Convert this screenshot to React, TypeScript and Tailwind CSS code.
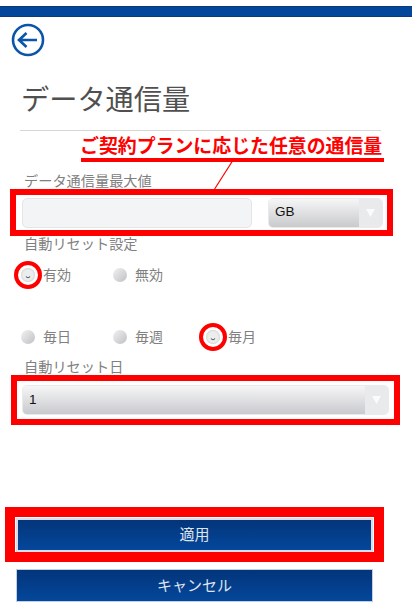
const jp = "font-['Noto_Sans_CJK_JP',sans-serif]";

function Radio({ checked }: { checked?: boolean }) {
  return (
    <span
      className={`flex h-[14px] w-[14px] shrink-0 items-end justify-center rounded-full ${
        checked
          ? "bg-[#eceded] shadow-[inset_0_0_2px_#b5b6b8]"
          : "bg-gradient-to-br from-[#f2f2f3] to-[#bfc0c3]"
      }`}
    >
      {checked && (
        <svg viewBox="0 0 6 3" className="mb-[3px] h-[3px] w-[6px]" aria-hidden>
          <path d="M1 0.5 Q3 3 5 0.5" fill="none" stroke="#555" strokeWidth="1.1" />
        </svg>
      )}
    </span>
  );
}

function RadioOption({ label, checked, ring, width }: { label: string; checked?: boolean; ring?: boolean; width: string }) {
  return (
    <div className={`flex items-center gap-[8px] ${width}`}>
      <span className="relative flex">
        <Radio checked={checked} />
        {ring && (
          <span className="absolute left-[-7px] top-[-7px] h-[28px] w-[28px] rounded-full border-[4px] border-[#ff0000]" />
        )}
      </span>
      <span className="pb-[2px] text-[14px] leading-[20px] text-[#808080]">{label}</span>
    </div>
  );
}

function Select({ value, width }: { value: string; width: string }) {
  return (
    <div className={`flex h-[30px] overflow-hidden rounded-[5px] border border-[#e9eaeb] ${width}`}>
      <div className="flex flex-1 items-center bg-gradient-to-b from-[#f6f6f7] to-[#c9cacd] pl-[6px] font-['Liberation_Sans',sans-serif] text-[13.5px] text-[#111]">
        {value}
      </div>
      <div className="flex w-[23px] items-center justify-center bg-[#e9eaeb]">
        <svg viewBox="0 0 10 9" className="h-[8px] w-[9px]" aria-hidden>
          <path d="M0 0H10L5 9Z" fill="#fbfbfb" />
        </svg>
      </div>
    </div>
  );
}

export default function App() {
  return (
    <div className={`relative h-[612px] w-[412px] overflow-hidden bg-white ${jp}`}>
      <div className="mt-[6px] h-[11px] border-y border-y-[#0a3a7c] bg-[#03479b]" />

      <div className="ml-[11px] mt-[6px] h-[34px] w-[34px]">
        <svg viewBox="0 0 34 34" className="h-[34px] w-[34px]" aria-hidden>
          <circle cx="17" cy="17" r="15" fill="none" stroke="#0b55a8" strokeWidth="2.6" />
          <path d="M26 17H8M15.5 10L8 17L15.5 24" fill="none" stroke="#0b55a8" strokeWidth="2.6" />
        </svg>
      </div>

      <h1 className="ml-[21px] mt-[9px] h-[64px] text-[28.2px] font-normal leading-[64px] text-[#505050]">データ通信量</h1>
      <div className="ml-[20px] h-px w-[361px] bg-[#d6d6d6]" />

      <div className="ml-[80px] h-[27px] w-[304px] whitespace-nowrap text-[18.9px] font-bold leading-[27px] text-[#ff0000]">
        ご契約プランに応じた任意の通信量
      </div>
      <div className="ml-[81px] h-[4px] w-[303px] bg-[#ff0000]" />
      <svg viewBox="0 0 20 30" className="absolute left-[213px] top-[161px] h-[30px] w-[20px]" aria-hidden>
        <path d="M19.5 0L1 29" stroke="#ff0000" strokeWidth="1.2" fill="none" />
      </svg>

      <div className="ml-[24px] h-[27px] pt-[8px] text-[14.2px] leading-[20px] text-[#808080]">データ通信量最大値</div>

      <div className="ml-[10px] flex h-[47px] w-[383px] items-center gap-[16px] border-[6px] border-[#ff0000] pl-[6px]">
        <div className="h-[30px] w-[230px] rounded-[5px] border border-[#e4e5e7] bg-[#f3f4f6]" />
        <Select value="GB" width="w-[115px]" />
      </div>

      <div className="ml-[24px] h-[16px] text-[14.2px] leading-[14px] text-[#808080]">自動リセット設定</div>

      <div className="ml-[21px] mt-[9px] flex h-[28px] items-center">
        <RadioOption label="有効" checked ring width="w-[92px]" />
        <RadioOption label="無効" width="w-[92px]" />
      </div>

      <div className="ml-[21px] mt-[34px] flex h-[28px] items-center">
        <RadioOption label="毎日" width="w-[92px]" />
        <RadioOption label="毎週" width="w-[93px]" />
        <RadioOption label="毎月" checked ring width="w-[92px]" />
      </div>

      <div className="ml-[24px] h-[24px] pt-[5px] text-[14.2px] leading-[20px] text-[#808080]">自動リセット日</div>

      <div className="ml-[11px] flex h-[50px] w-[389px] items-center border-[6px] border-[#ff0000] pl-[5px]">
        <Select value="1" width="w-[367px]" />
      </div>

      <div className="ml-[5px] mt-[82px] flex h-[55px] w-[379px] items-center border-[10px] border-[#ff0000] bg-white pl-[1px]">
        <button className="h-[34px] w-[357px] border-2 border-[#d9dee8] bg-gradient-to-b from-[#03357a] to-[#04479c] pb-[2px] text-[15px] leading-none text-[#dfe4ee]">
          適用
        </button>
      </div>

      <button className="ml-[16px] mt-[7px] block h-[33px] w-[357px] border border-[#c3cee0] bg-gradient-to-b from-[#03357a] to-[#04479c] pb-[2px] text-[15px] leading-none text-[#dfe4ee]">
        キャンセル
      </button>
    </div>
  );
}
